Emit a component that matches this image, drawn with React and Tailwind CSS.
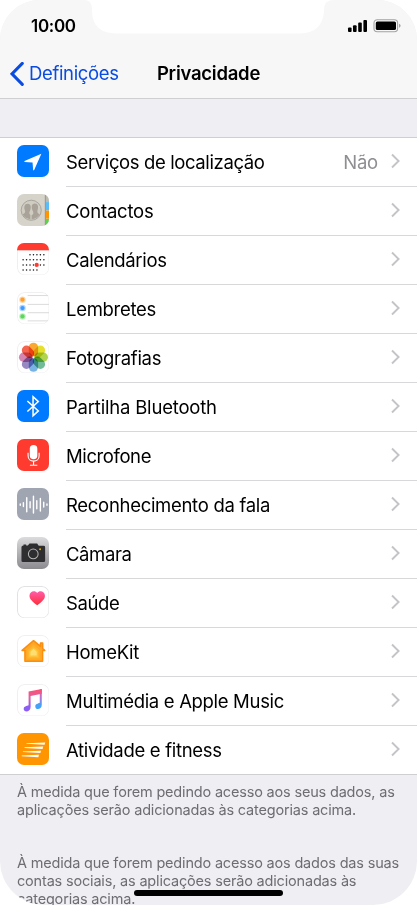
import React from 'react'

const IconBox = ({ className = '', children }) => (
  <svg viewBox="0 0 32 32" className={`w-[32.5px] h-[32.5px] rounded-[7px] shrink-0 ${className}`}>{children}</svg>
)

const LocationIcon = () => (
  <IconBox className="bg-[#007aff]">
    <path d="M24 8.6 L7.4 15.8 Q6.8 16.5 7.6 16.7 L15.3 17.2 L15.9 24.6 Q16.3 25.5 16.9 24.7 Z" fill="#fff" />
  </IconBox>
)

const ContactsIcon = () => (
  <IconBox className="bg-[#d6d4ca]">
    <rect x="27.4" width="1" height="32" fill="#8f8e87" />
    <rect x="28.4" width="3.6" height="8" fill="#bdbab0" />
    <rect x="28.4" y="8" width="3.6" height="8" fill="#5cbcf5" />
    <rect x="28.4" y="16.4" width="3.6" height="7.8" fill="#ff9500" />
    <rect x="28.4" y="24.6" width="3.6" height="7.4" fill="#5fd04f" />
    <circle cx="14" cy="16" r="9.9" fill="#cfccc2" stroke="#a5a199" strokeWidth="0.9" />
    <path d="M10.6 9.6 C7.2 9.6 6.8 13 7.6 15.4 C8.6 18 8 18.8 5.6 20 C7 23 9.6 24.4 13.2 24.8 V20.6 C11.6 19.7 11.9 18.2 12.9 16.3 C14 13.6 14 9.6 10.6 9.6 Z" fill="#a8a298" />
    <path d="M17.4 9.4 C21 9.4 21.2 13 20.4 15.2 C19.6 18 20 18.9 22.4 20 C20.8 23.2 18 24.6 14.4 24.9 V21 C16.9 19.6 16.2 18.1 15.2 16 C14.1 13.2 14.1 9.4 17.4 9.4 Z" fill="#a8a298" />
  </IconBox>
)

const CalendarIcon = () => (
  <IconBox className="bg-white">
    <rect x="0.5" y="0.5" width="31" height="31" rx="6.8" fill="none" stroke="#efefef" />
    <rect width="32" height="7.2" fill="#ff3b30" />
    <path
      d="M12.8 11.6 H27.2 M6 16.6 H27.2 M6 21.6 H27.2 M6 26.6 H20.5"
      fill="none"
      stroke="#151515"
      strokeWidth="1.5"
      strokeDasharray="0.01 3.4"
      strokeLinecap="round"
    />
    <circle cx="19.4" cy="21.6" r="2.1" fill="#ff3b30" />
  </IconBox>
)

const reminders = [['#ff9f2e', 7.6], ['#3e9bff', 15.8], ['#5dd65b', 24.1]]

const RemindersIcon = () => (
  <IconBox className="bg-white">
    <rect x="0.5" y="0.5" width="31" height="31" rx="6.8" fill="none" stroke="#f0f0f0" />
    {reminders.map(([color, y]) => (
      <g key={color}>
        <circle cx="5.4" cy={y} r="3.2" fill={color} opacity="0.4" />
        <circle cx="5.4" cy={y} r="2.1" fill={color} />
      </g>
    ))}
    <path d="M10.5 3.5 H32 M10.5 12.2 H32 M10.5 20.4 H32 M10.5 28.4 H32" stroke="#d8d8d8" strokeWidth="0.9" />
  </IconBox>
)

const petals = ['#f9a01b', '#e2dc17', '#a9d03c', '#5fb58c', '#6aabe0', '#8d7cbd', '#cf7aa8', '#f2543c']

const PhotosIcon = () => (
  <IconBox className="bg-white">
    <rect x="0.5" y="0.5" width="31" height="31" rx="6.8" fill="none" stroke="#f0f0f0" />
    {petals.map((color, i) => (
      <rect key={color} x="11.6" y="1.7" width="9.2" height="13.4" rx="4.6" fill={color} opacity="0.9" className="mix-blend-multiply" transform={`rotate(${i * 45} 16.2 16)`} />
    ))}
  </IconBox>
)

const BluetoothIcon = () => (
  <IconBox className="bg-[#007aff]">
    <path d="M10.2 10.8 L21 20.6 L15.8 25.4 V6.6 L21 11.4 L10.2 21.2" fill="none" stroke="#fff" strokeWidth="1.5" />
  </IconBox>
)

const MicIcon = () => (
  <IconBox className="bg-[#ff3b30]">
    <rect x="12.6" y="6" width="7.4" height="14" rx="3.7" fill="#fff" />
    <path d="M10.9 13.5 V16.5 C10.9 23.6 21.8 23.6 21.8 16.5 V13.5 M16.3 22 V25.6 M12.7 25.9 H20" fill="none" stroke="#fff" strokeWidth="1.1" />
  </IconBox>
)

const SpeechIcon = () => (
  <IconBox className="bg-[#a0a5b2]">
    <path d="M3.2 15.7 V17.1 M6.3 14.5 V18.3 M9.6 9.5 V23.3 M12.9 13.5 V19.5 M16.2 8 V24.7 M19.5 12.6 V20.4 M23 10.4 V22.6 M26.3 14 V18.8 M29.5 15.7 V17.1" stroke="#fff" strokeWidth="1.4" strokeLinecap="round" />
  </IconBox>
)

const CameraIcon = () => (
  <IconBox className="bg-linear-to-b from-[#dcdcde] to-[#8b8b90]">
    <path d="M6.4 7.3 H9 V8.3 H10.7 L12.3 6.5 H19.8 L21.4 8.7 H26.3 Q27.7 8.7 27.7 10.1 V23.3 Q27.7 24.7 26.3 24.7 H5.8 Q4.4 24.7 4.4 23.3 V9.8 Q4.4 8.3 6.4 8.3 Z" fill="#2e2e30" />
    <circle cx="16" cy="16.7" r="4.8" fill="none" stroke="#b4b4b4" strokeWidth="1" />
    <circle cx="22.7" cy="12" r="1" fill="#e0a800" />
  </IconBox>
)

const HealthIcon = () => (
  <IconBox className="bg-white">
    <defs>
      <linearGradient id="heart" x1="0" y1="0" x2="0" y2="1">
        <stop offset="0" stopColor="#ff5eab" />
        <stop offset="1" stopColor="#ff2d36" />
      </linearGradient>
    </defs>
    <rect x="0.5" y="0.5" width="31" height="31" rx="6.8" fill="none" stroke="#e2e2e4" />
    <path d="M19.9 19 C15 15.2 12.3 13 12.3 9.6 C12.3 4.8 18 3.8 19.9 7 C21.8 3.8 27.5 4.8 27.5 9.6 C27.5 13 24.9 15.2 19.9 19 Z" fill="url(#heart)" />
  </IconBox>
)

const HomeIcon = () => (
  <IconBox className="bg-white">
    <rect x="0.5" y="0.5" width="31" height="31" rx="6.8" fill="none" stroke="#f0f0f0" />
    <path d="M16.3 5.6 L5 15.2 H7.8 V25.8 H25.2 V15.2 H27.4 L25.3 13.2 V8 H23.1 V11.2 Z" fill="#ffa726" stroke="#fb8f0d" strokeWidth="1.5" strokeLinejoin="round" />
    <path d="M16.3 9.7 L10.2 14.9 V23.2 H22.3 V14.9 Z" fill="#ffb52e" />
    <path d="M16.3 12 L11.7 16 V21.7 H20.8 V16 Z" fill="#ffc43d" />
    <path d="M16.3 13.6 L13.2 16.4 V20.2 H19.4 V16.4 Z" fill="#ffdf70" />
  </IconBox>
)

const MusicIcon = () => (
  <IconBox className="bg-white">
    <defs>
      <linearGradient id="noteLeft" gradientUnits="userSpaceOnUse" x1="0" y1="5" x2="0" y2="27">
        <stop offset="0" stopColor="#fb4f72" />
        <stop offset="0.4" stopColor="#e061a5" />
        <stop offset="0.8" stopColor="#8b5cf6" />
      </linearGradient>
      <linearGradient id="noteRight" gradientUnits="userSpaceOnUse" x1="0" y1="5" x2="0" y2="24">
        <stop offset="0" stopColor="#fb4f72" />
        <stop offset="0.45" stopColor="#b474dc" />
        <stop offset="0.85" stopColor="#3fa4fa" />
      </linearGradient>
    </defs>
    <rect x="0.5" y="0.5" width="31" height="31" rx="6.8" fill="none" stroke="#f0f0f0" />
    <path d="M22.4 5.3 L24.4 4.9 V20.4 C24.4 25.6 18 26 18 22.2 C18 19.4 20.8 19.5 22.4 18.5 Z" fill="url(#noteRight)" />
    <path d="M11.4 7.5 L24.4 4.9 V9.5 L13.4 11.9 V22.4 C13.4 28.2 6.6 28.2 6.6 24.6 C6.6 21.5 9.6 21.8 11.4 20.8 Z" fill="url(#noteLeft)" />
  </IconBox>
)

const FitnessIcon = () => (
  <IconBox className="bg-[#ff9500]">
    <path d="M9.2 10.1 L27.8 9.3 L27.1 11.6 L9.2 10.7 Z M7.4 14.1 L25.8 13.3 L25.1 15.7 L7.4 14.7 Z M5.8 18.1 L23.7 17.4 L23 19.7 L5.8 18.7 Z M4.6 22.2 L21.6 21.4 L21 23.8 L4.6 22.8 Z" fill="#fff" />
  </IconBox>
)

const rows = [
  { label: 'Serviços de localização', icon: LocationIcon, value: 'Não', tracking: 'tracking-[-0.38px]' },
  { label: 'Contactos', icon: ContactsIcon, tracking: 'tracking-[-0.2px]' },
  { label: 'Calendários', icon: CalendarIcon, tracking: 'tracking-[-0.35px]' },
  { label: 'Lembretes', icon: RemindersIcon, tracking: 'tracking-[-0.3px]' },
  { label: 'Fotografias', icon: PhotosIcon, tracking: 'tracking-[-0.3px]' },
  { label: 'Partilha Bluetooth', icon: BluetoothIcon, tracking: 'tracking-[-0.2px]' },
  { label: 'Microfone', icon: MicIcon, tracking: 'tracking-[-0.4px]' },
  { label: 'Reconhecimento da fala', icon: SpeechIcon, tracking: 'tracking-[-0.3px]' },
  { label: 'Câmara', icon: CameraIcon, tracking: 'tracking-[-0.4px]' },
  { label: 'Saúde', icon: HealthIcon, tracking: 'tracking-[-0.4px]' },
  { label: 'HomeKit', icon: HomeIcon, tracking: 'tracking-[-0.3px]' },
  { label: 'Multimédia e Apple Music', icon: MusicIcon, tracking: 'tracking-[-0.32px]' },
  { label: 'Atividade e fitness', icon: FitnessIcon, tracking: 'tracking-[-0.3px]' },
]

const Row = ({ label, icon: Icon, value, tracking, first }) => (
  <div className="flex h-[49px] pl-[16.5px]">
    <div className="pt-[7.75px] w-[49.5px] shrink-0"><Icon /></div>
    <div className={`flex flex-1 items-center pr-[17px] ${first ? 'pb-px' : 'pb-0.5 border-t border-[#d8d8da]'}`}>
      <span className={`flex-1 text-[18.5px] leading-6 pt-0.5 text-black whitespace-nowrap ${tracking}`}>{label}</span>
      {value && <span className="text-[18.5px] tracking-[-0.2px] leading-6 pt-0.5 mr-[13px] text-[#8e8e93]">{value}</span>}
      <svg viewBox="0 0 9 16" className="w-[9px] h-4"><path d="M1 1.5 L7.6 8 L1 14.5" fill="none" stroke="#c4c4c8" strokeWidth="1.9" /></svg>
    </div>
  </div>
)

const StatusBar = () => (
  <div className="flex h-[50px] justify-between pl-[31px] pr-4">
    <span className="pt-[15px] text-[17px] leading-[22px] font-semibold tracking-[-0.3px]">10:00</span>
    <svg viewBox="0 0 54 14" className="w-[54px] h-3.5 mt-[19px]">
      <rect x="1" y="8.5" width="3.6" height="4.5" rx="1" />
      <rect x="6" y="6.3" width="3.6" height="6.7" rx="1" />
      <rect x="11.2" y="3.6" width="3.6" height="9.4" rx="1" />
      <rect x="16.4" y="0.9" width="3.6" height="12.1" rx="1" />
      <rect x="27" y="0.7" width="23.6" height="12" rx="3.2" fill="none" stroke="#a3a3a3" strokeWidth="1.1" />
      <rect x="28.8" y="2.4" width="20.2" height="8.7" rx="1.6" />
      <path d="M52 4.8 Q53.6 5.2 53.6 6.7 Q53.6 8.2 52 8.7 Z" fill="#a3a3a3" />
    </svg>
  </div>
)

export default function App() {
  return (
    <div className="relative w-[417px] h-[905px] overflow-hidden bg-white font-['Inter',sans-serif]">
      <div className="h-full rounded-t-[40px] rounded-b-[44px] overflow-hidden bg-[#efeef3]">
        <div className="h-[99px] bg-[#f7f7f7] border-b border-[#cfcfd2]">
          <StatusBar />
          <div className="grid grid-cols-[1fr_auto_1fr] items-center h-[46px] px-2.5">
            <div className="flex items-center text-[#0a4be0]">
              <svg viewBox="0 0 14 24" className="w-3.5 h-6 mt-px"><path d="M12.3 1.4 L2 11.9 L12.3 22.4" fill="none" stroke="currentColor" strokeWidth="3" strokeLinecap="round" /></svg>
              <span className="ml-[5px] text-[18.5px] leading-6 tracking-[-0.35px]">Definições</span>
            </div>
            <h1 className="text-[18.5px] leading-6 font-semibold tracking-[-0.25px]">Privacidade</h1>
          </div>
        </div>
        <div className="mt-[38px] bg-white border-b border-[#cfcfd2] shadow-[inset_0_1px_0_#cfcfd2]">
          {rows.map((r, i) => <Row key={r.label} {...r} first={i === 0} />)}
        </div>
        <div className="pl-[17px] pt-2 text-[14.5px] leading-[18px] tracking-[-0.18px] text-[#6d6d72] whitespace-nowrap">
          <p>À medida que forem pedindo acesso aos seus dados, as<br />aplicações serão adicionadas às categorias acima.</p>
          <p className="mt-[35px]">À medida que forem pedindo acesso aos dados das suas<br />contas sociais, as aplicações serão adicionadas às<br />categorias acima.</p>
        </div>
      </div>
      <svg viewBox="0 0 250 34" className="absolute left-[84px] top-0 w-[250px] h-[34px]">
        <path d="M0 0 H250 Q240 0 240 9 V12 Q238 33 216 33.5 H32 Q9 33 8 12 V9 Q8 0 0 0 Z" fill="#fff" />
      </svg>
      <div className="absolute left-[134px] top-[890px] w-[149px] h-1.5 rounded-full bg-black" />
    </div>
  )
}
